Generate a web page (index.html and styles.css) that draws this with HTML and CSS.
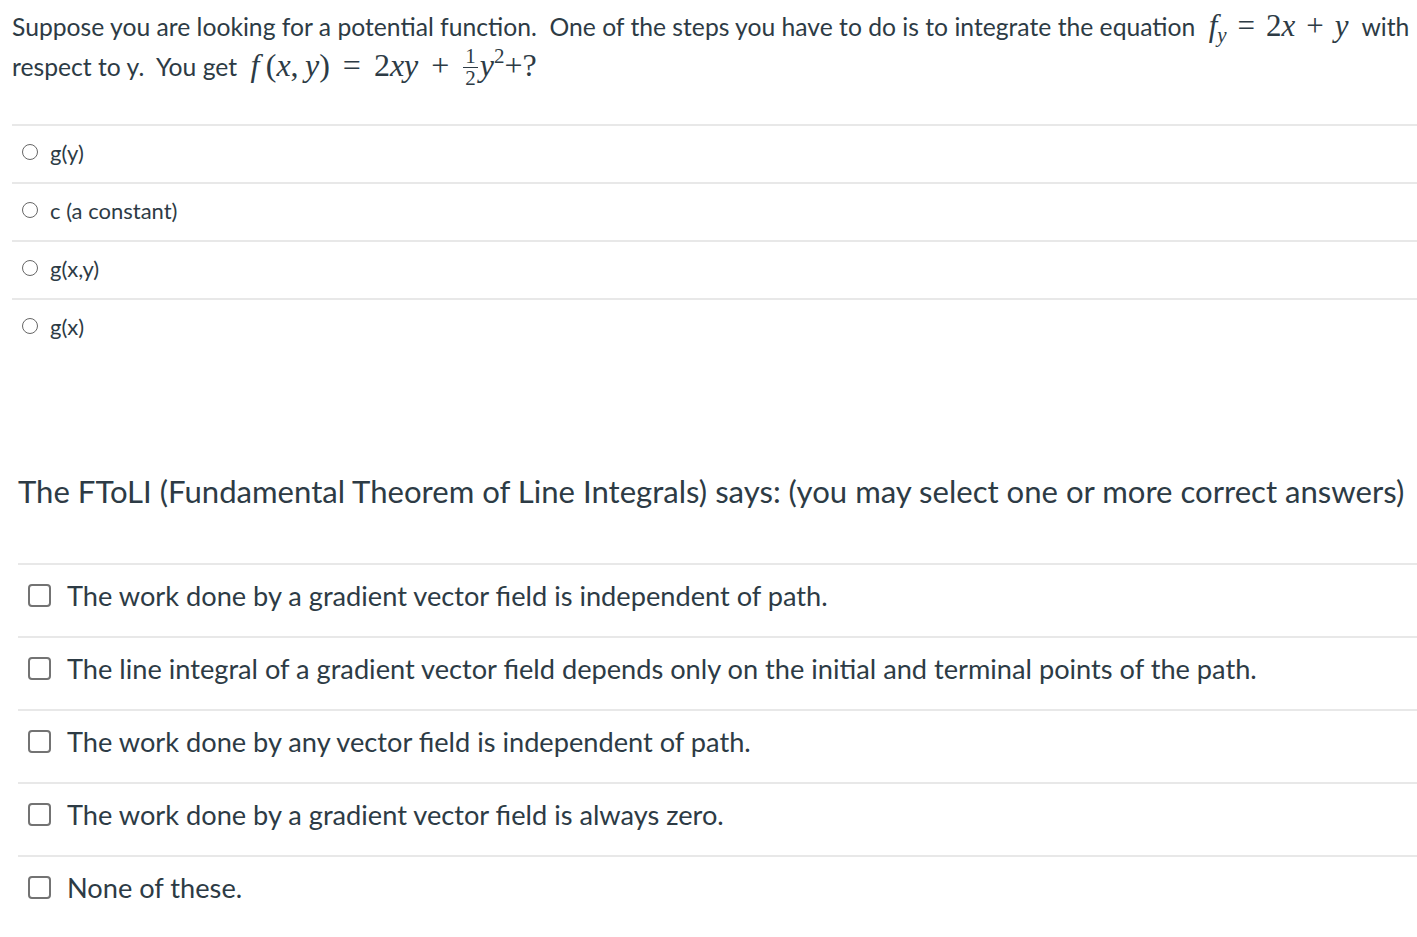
FILE: index.html
```html
<!DOCTYPE html>
<html>
<head>
<meta charset="utf-8">
<link rel="stylesheet" href="styles.css">
</head>
<body>
<div class="page">
  <section class="q1">
    <p class="prompt">Suppose you are looking for a potential function.&nbsp; One of the steps you have to do is to integrate the equation <span class="math"><i>f</i><sub><i>y</i></sub><span class="op">=</span>2<i>x</i><span class="op">+</span><i>y</i></span> with respect to y.&nbsp; You get <span class="math math-wide"><i>f</i>&#8201;(<i>x</i>,&#8201;<i>y</i>)<span class="op">=</span>2<i>xy</i><span class="op">+</span><span class="frac"><span class="num">1</span><span class="den">2</span></span><i>y</i><sup>2</sup>+?</span></p>
    <ul class="choices radio-list">
      <li class="choice"><span class="radio"></span><span>g(y)</span></li>
      <li class="choice"><span class="radio"></span><span>c (a constant)</span></li>
      <li class="choice"><span class="radio"></span><span>g(x,y)</span></li>
      <li class="choice"><span class="radio"></span><span>g(x)</span></li>
    </ul>
  </section>
  <section class="q2">
    <p class="heading">The FToLI (Fundamental Theorem of Line Integrals) says: (you may select one or more correct answers)</p>
    <ul class="choices check-list">
      <li class="choice"><span class="check"></span><span>The work done by a gradient vector field is independent of path.</span></li>
      <li class="choice"><span class="check"></span><span>The line integral of a gradient vector field depends only on the initial and terminal points of the path.</span></li>
      <li class="choice"><span class="check"></span><span>The work done by any vector field is independent of path.</span></li>
      <li class="choice"><span class="check"></span><span>The work done by a gradient vector field is always zero.</span></li>
      <li class="choice"><span class="check"></span><span>None of these.</span></li>
    </ul>
  </section>
</div>
</body>
</html>
```

FILE: styles.css
```css
html, body {
  margin: 0;
  padding: 0;
  background: #ffffff;
}
body {
  font-family: Lato, "Open Sans", sans-serif;
  color: #2d3b45;
}
.page {
  width: 1417px;
}
.q1 {
  padding-left: 12px;
}
.prompt {
  margin: 0;
  padding-top: 6px;
  font-size: 24.7px;
  line-height: 39px;
}
.math {
  font-family: "Liberation Serif", "DejaVu Serif", serif;
  font-size: 31px;
  white-space: nowrap;
  margin: 0 7px;
  color: #2d3b45;
}
.math-wide {
  font-size: 32px;
}
.math-wide .op {
  margin: 0 13px;
}
.math i {
  font-style: italic;
}
.math sub {
  font-size: 21px;
  vertical-align: -6px;
  line-height: 0;
}
.math sup {
  font-size: 21px;
  vertical-align: 13px;
  line-height: 0;
}
.op {
  margin: 0 11px;
}
.frac {
  display: inline-flex;
  flex-direction: column;
  align-items: center;
  vertical-align: 13px;
  font-size: 21px;
  line-height: 17px;
  margin: 0 2px 0 1px;
}
.frac .num {
  border-bottom: 1px solid #2d3b45;
  padding: 0 2px 2px;
}
.frac .den {
  padding-top: 2px;
}
.choices {
  list-style: none;
  margin: 0;
  padding: 0;
}
.radio-list {
  margin-top: 37px;
}
.radio-list .choice {
  display: flex;
  align-items: center;
  height: 52px;
  padding-bottom: 4px;
  border-top: 2px solid #e8e8e8;
  font-size: 22px;
  padding-left: 10px;
  gap: 12px;
}
.radio {
  width: 16px;
  height: 16px;
  border: 1.6px solid #666666;
  border-radius: 50%;
  box-sizing: border-box;
  flex: none;
}
.q2 {
  padding-left: 18px;
  margin-top: 115px;
}
.heading {
  margin: 0;
  font-size: 31.1px;
  line-height: 40px;
}
.check-list {
  margin-top: 52px;
}
.check-list .choice {
  display: flex;
  align-items: center;
  height: 61px;
  padding-bottom: 10px;
  border-top: 2px solid #e8e8e8;
  font-size: 27.2px;
  padding-left: 10px;
  gap: 16px;
}
.check {
  width: 23px;
  height: 23px;
  border: 2px solid #737373;
  border-radius: 4px;
  box-sizing: border-box;
  flex: none;
}
```
